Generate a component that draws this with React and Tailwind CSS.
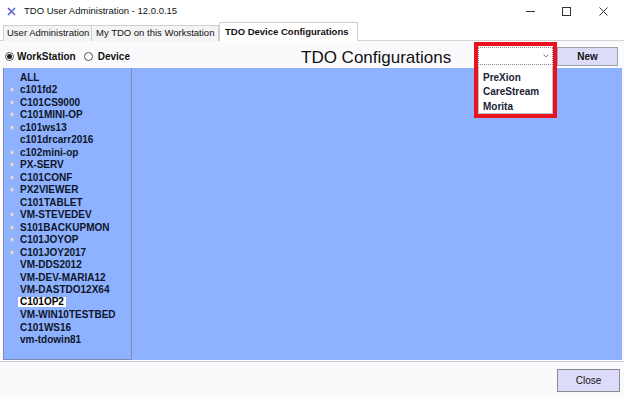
import React from "react";

const items = [
  ["ALL", false],
  ["c101fd2", true],
  ["C101CS9000", true],
  ["C101MINI-OP", true],
  ["c101ws13", true],
  ["c101drcarr2016", false],
  ["c102mini-op", true],
  ["PX-SERV", true],
  ["C101CONF", true],
  ["PX2VIEWER", true],
  ["C101TABLET", false],
  ["VM-STEVEDEV", true],
  ["S101BACKUPMON", true],
  ["C101JOYOP", true],
  ["C101JOY2017", true],
  ["VM-DDS2012", false],
  ["VM-DEV-MARIA12", false],
  ["VM-DASTDO12X64", false],
  ["C101OP2", false, true],
  ["VM-WIN10TESTBED", false],
  ["C101WS16", false],
  ["vm-tdowin81", false],
];

function Arrow() {
  return (
    <svg width="5" height="7" viewBox="0 0 5 7" className="block">
      <polygon points="0.5,0.5 4.5,3.5 0.5,6.5" fill="#dfe4ee" stroke="#aab3c6" strokeWidth="0.8" />
    </svg>
  );
}

function Radio({ checked }) {
  return (
    <span className="w-[9px] h-[9px] rounded-full border border-[#555] bg-white flex items-center justify-center">
      {checked && <span className="w-[5px] h-[5px] rounded-full bg-[#222]" />}
    </span>
  );
}

export default function App() {
  return (
    <div className="w-[624px] h-[399px] bg-[#fafafc] flex flex-col overflow-hidden relative font-['Liberation_Sans',Arial,sans-serif] text-[#111]">
      {/* Title bar */}
      <div className="h-[22px] bg-white flex items-center shrink-0">
        <svg width="9" height="9" viewBox="0 0 9 9" className="ml-[7px]">
          <line x1="1" y1="1" x2="4.5" y2="4.5" stroke="#7b3fc4" strokeWidth="1.6" />
          <line x1="8" y1="1" x2="4.5" y2="4.5" stroke="#3a7be0" strokeWidth="1.6" />
          <line x1="1" y1="8" x2="4.5" y2="4.5" stroke="#2f6fd8" strokeWidth="1.6" />
          <line x1="8" y1="8" x2="4.5" y2="4.5" stroke="#8a4bd0" strokeWidth="1.6" />
        </svg>
        <span className="ml-[8px] text-[9.5px] leading-none">TDO User Administration - 12.0.0.15</span>
        <div className="ml-auto flex items-center h-full">
          <div className="w-[36px] h-full flex items-center justify-center">
            <svg width="9" height="9" viewBox="0 0 9 9"><line x1="0" y1="4.5" x2="9" y2="4.5" stroke="#333" strokeWidth="1" /></svg>
          </div>
          <div className="w-[36px] h-full flex items-center justify-center">
            <svg width="9" height="9" viewBox="0 0 9 9"><rect x="0.5" y="0.5" width="8" height="8" fill="none" stroke="#333" strokeWidth="1" /></svg>
          </div>
          <div className="w-[38px] h-full flex items-center justify-center mr-[2px]">
            <svg width="9" height="9" viewBox="0 0 9 9"><path d="M0.5 0.5 L8.5 8.5 M8.5 0.5 L0.5 8.5" stroke="#333" strokeWidth="1" /></svg>
          </div>
        </div>
      </div>

      {/* Tabs */}
      <div className="h-[19px] shrink-0 bg-white flex items-end pl-[3px] border-b border-[#d4d4d4]">
        <div className="h-[16px] w-[89px] border border-b-0 border-[#cfcfcf] bg-[#f4f4f4] text-[9.5px] flex items-center pl-[3px] -mb-px">User Administration</div>
        <div className="h-[16px] w-[127px] border border-b-0 border-l-0 border-[#cfcfcf] bg-[#f4f4f4] text-[9.5px] flex items-center pl-[4px] -mb-px">My TDO on this Workstation</div>
        <div className="h-[19px] w-[139px] border border-b-0 border-[#cfcfcf] bg-white text-[9.5px] font-bold flex items-center pl-[5px] -mb-px relative z-10">TDO Device Configurations</div>
      </div>

      {/* Radio / header row */}
      <div className="h-[27px] shrink-0 flex items-center pl-[5px] pt-[3px]">
        <div className="w-[296px] flex items-center text-[10px] font-bold">
          <Radio checked />
          <span className="ml-[3px]">WorkStation</span>
          <span className="ml-[8px]"><Radio /></span>
          <span className="ml-[5px]">Device</span>
        </div>
        <div className="w-[177px] text-[17px] leading-none pt-[2px]">TDO Configurations</div>
        <div className="w-[75px] h-[18px] bg-white border border-dotted border-[#8a8a8a] flex items-center justify-end pr-[3px]">
          <svg width="6" height="4" viewBox="0 0 6 4"><path d="M0.5 0.5 L3 3 L5.5 0.5" fill="none" stroke="#777" strokeWidth="0.9" /></svg>
        </div>
        <div className="ml-[4px] w-[61px] h-[19px] bg-[#dcdcf8] border border-[#a0a0a8] flex items-center justify-center text-[10px] font-bold">New</div>
      </div>

      {/* Blue area */}
      <div className="h-[292px] shrink-0 flex pl-[3px] pr-[2px]">
        <div className="w-[129px] h-full bg-[#8eb2ff] border-l border-b border-r border-[#7d8db0] pt-[3px]">
          {items.map(([name, arrow, sel]) => (
            <div key={name} className="h-[12.5px] flex items-center text-[10px] font-bold text-[#0f1529]">
              <div className="w-[16px] flex justify-end pr-[5px]">{arrow && <Arrow />}</div>
              {sel ? (
                <span className="bg-white px-[2px] -ml-[2px] leading-[10px] text-black">{name}</span>
              ) : (
                <span>{name}</span>
              )}
            </div>
          ))}
        </div>
        <div className="flex-1 h-full bg-[#8eb2ff]" />
      </div>

      {/* Separator + footer */}
      <div className="h-[2px] shrink-0 border-t border-[#ffffff] border-b border-b-[#c8c8d0]" />
      <div className="flex-1 flex justify-end items-start pt-[7px] pr-[4px]">
        <div className="w-[63px] h-[23px] bg-[#dcdcf8] border border-[#8a8a90] flex items-center justify-center text-[10px]">Close</div>
      </div>

      {/* Dropdown list overlay */}
      <div className="absolute left-[478px] top-[66px] w-[75px] h-[48px] bg-white border border-t-0 border-[#c0c0c0] pt-[4px] pl-[4px] text-[10px] font-bold text-[#1a1d38]">
        <div className="h-[14.5px] flex items-center">PreXion</div>
        <div className="h-[14.5px] flex items-center">CareStream</div>
        <div className="h-[14.5px] flex items-center">Morita</div>
      </div>

      {/* Red annotation box */}
      <div className="absolute left-[474px] top-[42px] w-[83px] h-[76px] border-[4px] border-[#e8131f] pointer-events-none" />
    </div>
  );
}
